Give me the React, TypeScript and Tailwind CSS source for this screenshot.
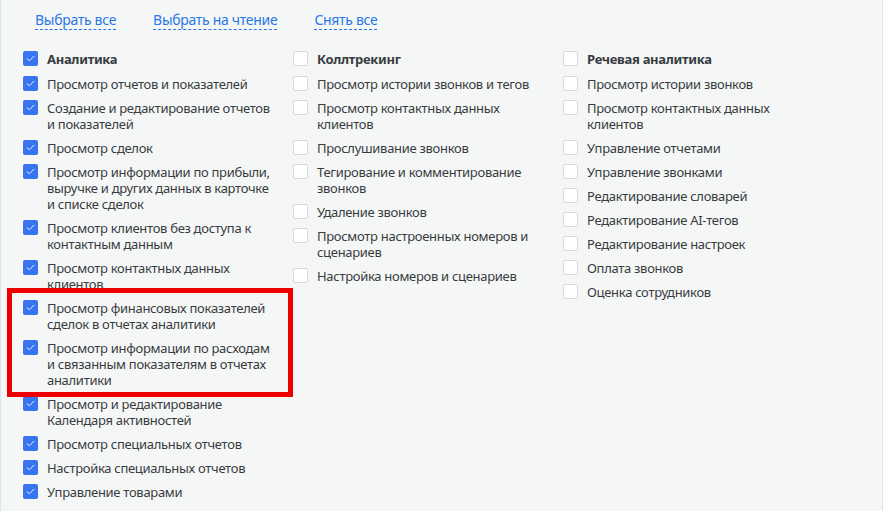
import React from "react";

type Item = { label: string; checked?: boolean };

const analytics: Item[] = [
  { label: "Просмотр отчетов и показателей", checked: true },
  { label: "Создание и редактирование отчетов и показателей", checked: true },
  { label: "Просмотр сделок", checked: true },
  { label: "Просмотр информации по прибыли, выручке и других данных в карточке и списке сделок", checked: true },
  { label: "Просмотр клиентов без доступа к контактным данным", checked: true },
  { label: "Просмотр контактных данных клиентов", checked: true },
];

const analyticsMarked: Item[] = [
  { label: "Просмотр финансовых показателей сделок в отчетах аналитики", checked: true },
  { label: "Просмотр информации по расходам и связанным показателям в отчетах аналитики", checked: true },
];

const analyticsTail: Item[] = [
  { label: "Просмотр и редактирование Календаря активностей", checked: true },
  { label: "Просмотр специальных отчетов", checked: true },
  { label: "Настройка специальных отчетов", checked: true },
  { label: "Управление товарами", checked: true },
];

const calltracking: Item[] = [
  { label: "Просмотр истории звонков и тегов" },
  { label: "Просмотр контактных данных клиентов" },
  { label: "Прослушивание звонков" },
  { label: "Тегирование и комментирование звонков" },
  { label: "Удаление звонков" },
  { label: "Просмотр настроенных номеров и сценариев" },
  { label: "Настройка номеров и сценариев" },
];

const speech: Item[] = [
  { label: "Просмотр истории звонков" },
  { label: "Просмотр контактных данных клиентов" },
  { label: "Управление отчетами" },
  { label: "Управление звонками" },
  { label: "Редактирование словарей" },
  { label: "Редактирование AI-тегов" },
  { label: "Редактирование настроек" },
  { label: "Оплата звонков" },
  { label: "Оценка сотрудников" },
];

function Checkbox({ checked }: { checked?: boolean }) {
  if (checked) {
    return (
      <span className="w-[15px] h-[15px] shrink-0 rounded-[2px] bg-[#3a74ef] flex items-center justify-center">
        <svg width="9" height="7" viewBox="0 0 9 7" fill="none">
          <path d="M1 3.6 L3.4 5.8 L8 1.2" stroke="#e8efff" strokeWidth="1" strokeLinecap="round" strokeLinejoin="round" />
        </svg>
      </span>
    );
  }
  return <span className="w-[15px] h-[15px] shrink-0 rounded-[2px] bg-white border border-[#d6dadf]" />;
}

function Row({ item, bold }: { item: Item; bold?: boolean }) {
  return (
    <div className="flex items-start gap-[9px]">
      <Checkbox checked={item.checked} />
      <span
        className={`max-w-[232px] text-[13px] leading-4 tracking-[-0.3px] text-[#383c40] ${bold ? "font-bold" : ""}`}
      >
        {item.label}
      </span>
    </div>
  );
}

function Column({ title, checked, children }: { title: string; checked?: boolean; children: React.ReactNode }) {
  return (
    <div className="w-[270px] flex flex-col gap-2">
      <div className="mb-px">
        <Row item={{ label: title, checked }} bold />
      </div>
      {children}
    </div>
  );
}

export default function App() {
  return (
    <div className="w-[884px] h-[511px] overflow-hidden bg-white" style={{ fontFamily: '"Noto Sans", "Open Sans", sans-serif' }}>
      <div className="w-[883px] h-full bg-[#f5f7f7] border-x border-[#dde3ec]">
        {/* Bulk actions */}
        <div className="flex gap-[37px] pl-[34px] pt-[10px]">
          {["Выбрать все", "Выбрать на чтение", "Снять все"].map((l) => (
            <a
              key={l}
              href="#"
              className="text-[14px] leading-5 tracking-[-0.3px] text-[#2a78e4] underline decoration-dashed decoration-1 underline-offset-[4px]"
            >
              {l}
            </a>
          ))}
        </div>

        {/* Permission groups */}
        <div className="flex pl-[22px] mt-[21px]">
          <Column title="Аналитика" checked>
            {analytics.map((it) => (
              <Row key={it.label} item={it} />
            ))}
            <div className="relative flex flex-col gap-2">
              <div className="absolute -top-[12px] -bottom-[9px] -left-[16px] right-0 border-[5px] border-[#ee0000] pointer-events-none" />
              {analyticsMarked.map((it) => (
                <Row key={it.label} item={it} />
              ))}
            </div>
            {analyticsTail.map((it) => (
              <Row key={it.label} item={it} />
            ))}
          </Column>
          <Column title="Коллтрекинг">
            {calltracking.map((it) => (
              <Row key={it.label} item={it} />
            ))}
          </Column>
          <Column title="Речевая аналитика">
            {speech.map((it) => (
              <Row key={it.label} item={it} />
            ))}
          </Column>
        </div>
      </div>
    </div>
  );
}
